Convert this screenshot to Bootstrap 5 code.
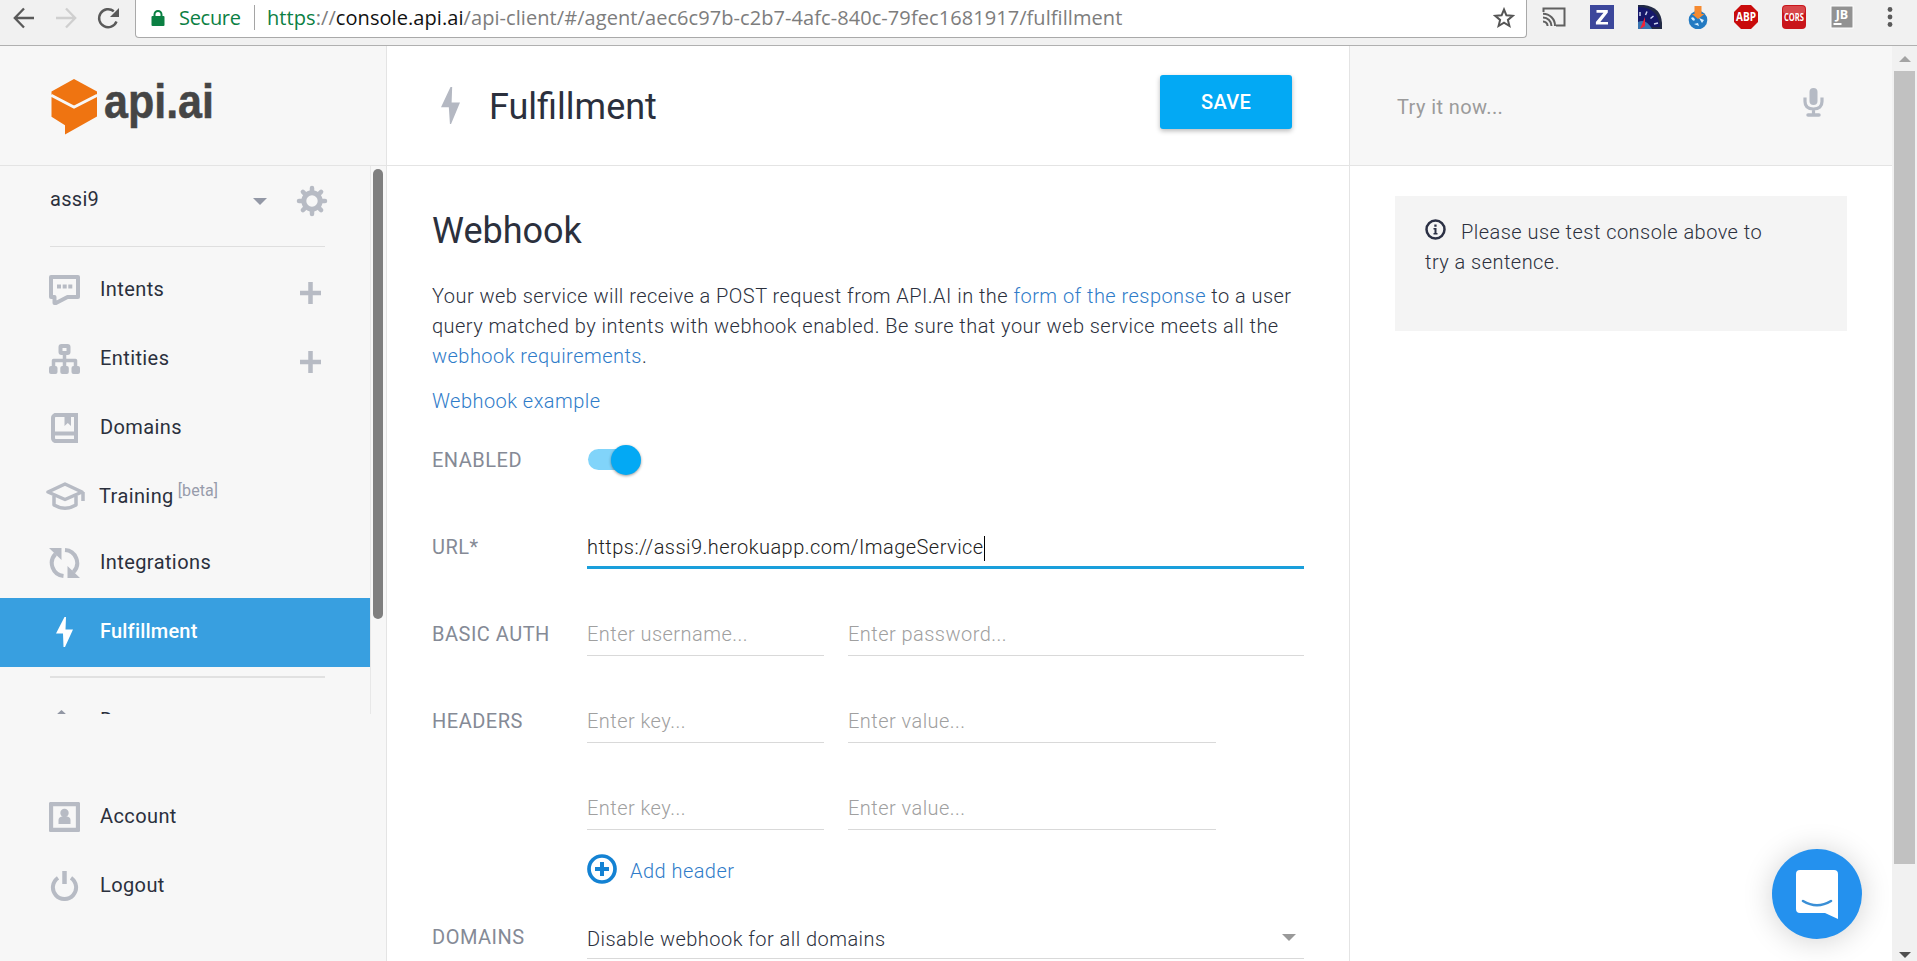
<!DOCTYPE html>
<html lang="en">
<head>
<meta charset="utf-8">
<title>Fulfillment - api.ai</title>
<link rel="stylesheet" href="https://cdn.jsdelivr.net/npm/bootstrap@5.3.0/dist/css/bootstrap.min.css">
<style>
  html, body { height: 961px; overflow: hidden; }
  body { font-family: Roboto, "Liberation Sans", sans-serif; font-size: 20px; line-height: 30px; color: #2b303d; background: #fff; }
  a { color: #2f7cc9; text-decoration: none; }
  svg { display: block; flex: none; }

  .browser-bar { height: 46px; background: #f1f1f1; border-bottom: 1px solid #b0b0b0; padding: 0 21px 0 12px; }
  .omnibox { width: 1392px; height: 38px; margin-left: 13px; border: 1px solid #a9a9a9; border-top: 0; border-radius: 0 0 4px 4px; background: #fff; padding: 0 11px 2px 14px; font-family: "Open Sans", "Noto Sans", sans-serif; font-size: 20px; }
  .secure { color: #0b8043; letter-spacing: -.3px; width: 75px; margin-left: 13px; }
  .bar-sep { width: 1px; height: 25px; background: #a5a5a5; margin-right: 12px; }
  .address { color: #7d7d7d; white-space: nowrap; letter-spacing: .07px; }
  .address b { font-weight: 400; color: #111; }
  .address i { font-style: normal; color: #0b8043; }
  .ext { width: 24px; height: 24px; margin-right: 24px; }

  .app { height: 915px; }
  .side { width: 387px; background: #f7f7f7; border-right: 1px solid #e4e4e4; }
  .top-row { height: 120px; border-bottom: 1px solid #e4e4e4; }
  .side-scroll { height: 548px; overflow: hidden; }
  .side-list { width: 371px; border-right: 1px solid #e8e8e8; }
  .side-thumb { width: 10px; height: 450px; margin: 3px 0 0 2px; border-radius: 5px; background: #7f7f7f; }
  .agent { height: 81px; margin: 0 45px 0 50px; border-bottom: 1px solid #dfdfdf; padding-bottom: 14px; letter-spacing: .3px; }
  .item { height: 69px; padding: 0 48px 2px 49px; letter-spacing: .4px; }
  .item .label-text { margin-left: 20px; padding-bottom: 2px; }
  .item.current { background: #389fe0; color: #fff; font-weight: 500; width: 370px; letter-spacing: .2px; }
  .item sup { font-size: 16px; color: #979cab; top: -.42em; margin-left: 4px; letter-spacing: .1px; }
  .ico { color: #b7bbc4; }
  .rule { height: 2px; margin: 9px 45px 8px 50px; background: #e1e1e1; }

  .main { width: 963px; border-right: 1px solid #e4e4e4; }
  .page-title { font-size: 36px; line-height: 42px; letter-spacing: 0; }
  .btn-save { width: 132px; height: 54px; background: #03a9f4; color: #fff; font-size: 20px; font-weight: 500; border-radius: 3px; box-shadow: 0 2px 5px rgba(0,0,0,.28); border: 0; letter-spacing: .3px; }
  .content { padding: 44px 45px 0 45px; font-weight: 300; letter-spacing: .46px; }
  .field { display: grid; grid-template-columns: 155px 1fr; height: 87px; }
  .field-name { color: #858a96; font-weight: 400; letter-spacing: .5px; }
  .line { height: 37px; border: 0; border-bottom: 1px solid #d9d9d9; border-radius: 0; padding: 0 0 6px; font-size: 20px; font-weight: 300; line-height: 30px; background: transparent; letter-spacing: inherit; }
  .line::placeholder { color: #a0a0a0; opacity: 1; }
  .w-key { width: 237px; }
  .w-val { width: 368px; }
  .w-pass { width: 456px; }
  .line-active { border-bottom: 3px solid #1a9fdb; padding-bottom: 4px; width: 717px; color: #222; }
  .cursor { width: 1px; height: 25px; background: #000; }
  .toggle { position: relative; width: 54px; height: 22px; margin-top: 4px; }
  .toggle-track { width: 48px; height: 21px; border-radius: 11px; background: #81d4fa; margin-left: 1px; }
  .toggle-knob { position: absolute; right: 0; top: -4px; width: 30px; height: 30px; border-radius: 50%; background: #03a9f4; box-shadow: 0 1px 3px rgba(0,0,0,.4); }

  .console { width: 542px; }
  .console .top-row { background: #f7f7f7; padding: 0 68px 0 47px; color: #9b9b9b; font-weight: 400; letter-spacing: .4px; }
  .tip { margin: 30px 45px 0; height: 135px; background: #f4f4f4; padding: 21px 60px 0 30px; font-weight: 300; letter-spacing: .46px; }
  .page-scroll { width: 25px; background: #f1f1f1; }
  .page-thumb { width: 21px; height: 793px; background: #c1c1c1; }
  .chat { position: absolute; left: 1772px; top: 849px; width: 90px; height: 90px; border-radius: 50%; background: #2491ee; box-shadow: 0 2px 30px rgba(0,0,0,.18); }
</style>
</head>
<body class="d-flex flex-column">
<header class="browser-bar d-flex align-items-start">
  <div class="d-flex align-items-center" style="height:35px">
    <svg width="24" height="24" viewBox="0 0 24 24" fill="none" stroke="#5a5a5a" stroke-width="2.3"><path d="M22 12H3M12 2.500 2.800 12l9.200 9.500"/></svg>
    <svg class="ms-3" width="26" height="24" viewBox="0 0 26 24" fill="none" stroke="#cfcfcf" stroke-width="2.300"><path d="M4 12h19M14 2.500 23.200 12 14 21.500"/></svg>
    <svg class="ms-3" width="28" height="24" viewBox="0 0 28 24"><path d="M22.500 15.500A9 9 0 1 1 19.800 5.200" fill="none" stroke="#5a5a5a" stroke-width="2.400"/><path d="M25 2v9h-9z" fill="#5a5a5a"/></svg>
  </div>
  <div class="omnibox d-flex align-items-center">
    <svg width="16" height="18" viewBox="0 0 16 18"><path d="M4.500 8V5.500a3.500 3.500 0 0 1 7 0V8" fill="none" stroke="#0b8043" stroke-width="2"/><rect x="1.500" y="7" width="13" height="10" rx="1" fill="#0b8043"/></svg>
    <span class="secure">Secure</span>
    <span class="bar-sep"></span>
    <span class="address"><i>https</i>://<b>console.api.ai</b>/api-client/#/agent/aec6c97b-c2b7-4afc-840c-79fec1681917/fulfillment</span>
    <svg class="ms-auto" width="22" height="22" viewBox="0 0 22 22" fill="none" stroke="#555" stroke-width="2"><path d="M11 2.500 13.400 8.300 19.700 8.800 14.900 12.900 16.400 19 11 15.700 5.600 19 7.100 12.900 2.300 8.800 8.600 8.300Z"/></svg>
  </div>
  <div class="d-flex align-items-center ms-auto" style="height:34px">
    <svg class="ext" viewBox="0 0 24 24" fill="none" stroke="#606060" stroke-width="2"><path d="M1.500 7V3.500h21v17H14M1 12.500A8.500 8.500 0 0 1 9.500 21M1 8.700A12 12 0 0 1 13 21M1 16.400A4.600 4.600 0 0 1 5.600 21"/></svg>
    <svg class="ext" viewBox="0 0 24 24"><rect width="24" height="24" fill="#3c479b"/><path d="M6.500 5h11.300v2.500L10.300 17h7.700v2.600H5.900V17l7.600-9.300h-7z" fill="#fff"/></svg>
    <svg class="ext" viewBox="0 0 24 24"><path d="M0 0h6q17 2 18 18v6H0z" fill="#222a45"/><path d="M0 2q20 0 22 20H0z" fill="#15176a"/><path d="M0 17q8-4 14 7H0z" fill="#3974b0"/><path d="M2 7v4M9 6.500 7.500 10M15.500 11l-3 2.500M20 18l-4 1" stroke="#ccd4f0" stroke-width="1.500"/><path d="M7 12 2 24l5-3z" fill="#f02338"/></svg>
    <svg class="ext" viewBox="0 0 24 24"><circle cx="12" cy="15" r="9.300" fill="#237ac2"/><path d="M5 13q3-2 4 2-2 2-4-2M13 13l5 2-2 3zM8 19l4-1 1 3z" fill="#d8f0ff"/><path d="M8.500 1h7v8h3L12 14 6 9h2.500z" fill="#f68a30"/></svg>
    <svg class="ext" viewBox="0 0 24 24"><path d="M7 0h10l7 7v10l-7 7H7l-7-7V7z" fill="#c90b0b"/><text x="12" y="16.300" text-anchor="middle" font-family="Open Sans" font-size="11.500" font-weight="700" fill="#fff" textLength="20" lengthAdjust="spacingAndGlyphs">ABP</text></svg>
    <svg class="ext" viewBox="0 0 24 24"><rect width="24" height="24" rx="4" fill="#c9151b"/><rect x="1" y="1" width="22" height="8" rx="3" fill="#d8484b"/><text x="12" y="16" text-anchor="middle" font-family="Open Sans" font-size="10.500" font-weight="700" fill="#fff" textLength="20" lengthAdjust="spacingAndGlyphs">CORS</text></svg>
    <svg class="ext" viewBox="0 0 24 24" overflow="visible"><rect x="1" y="1" width="22" height="22" fill="#929292" stroke="#fff"/><text x="12" y="13.500" text-anchor="middle" font-family="Open Sans" font-size="12.500" font-weight="700" fill="#fff">JB</text><path d="M3.500 19h8" stroke="#fff" stroke-width="2"/></svg>
    <svg width="18" height="24" viewBox="0 0 18 24" fill="#5a5a5a"><circle cx="12" cy="4.500" r="2.400"/><circle cx="12" cy="12" r="2.400"/><circle cx="12" cy="19.500" r="2.400"/></svg>
  </div>
</header>

<div class="app d-flex">
  <aside class="side d-flex flex-column">
    <div class="top-row">
      <svg width="240" height="119" viewBox="0 46 240 119"><path d="M74 79 97 91.500v3.200L74 106.800 51.500 94.700v-3.200z" fill="#ef7411"/><path d="M51.500 97 74 108.700 97 97v19.500L65 134.500v-9.300l-13.500-8.500z" fill="#ef7411"/><path d="M51.500 94.800 74 106.700 97 94.800" fill="none" stroke="#f7f7f7" stroke-width="2"/><text x="104" y="117.700" font-family="Liberation Sans" font-weight="700" font-size="48" fill="#454545" stroke="#454545" stroke-width=".5" textLength="110" lengthAdjust="spacingAndGlyphs">api.ai</text></svg>
    </div>
    <div class="side-scroll d-flex align-items-start">
      <nav class="side-list">
        <div class="agent d-flex align-items-center">
          <span>assi9</span>
          <svg class="ms-auto" width="14" height="7" viewBox="0 0 14 7" style="margin-top:4px"><path d="M0 0h14L7 7z" fill="#9398a6"/></svg>
          <svg class="ico" width="32" height="32" viewBox="0 0 32 32" style="margin:4px -3px 0 29px"><g fill="none" stroke="currentColor"><circle cx="16" cy="16" r="8.200" stroke-width="5"/><path stroke-width="4.500" stroke-linecap="round" d="M16 3v3M16 26v3M3 16h3M26 16h3M6.900 6.900l2 2M23.100 23.100l2 2M6.900 25.100l2-2M23.100 8.900l2-2"/></g></svg>
        </div>
        <div style="height:9px"></div>
        <div class="item d-flex align-items-center">
          <svg class="ico" width="31" height="30" viewBox="0 0 31 30"><path d="M2 2h27v20H18.500L7 28H5.500v-6H2z" fill="none" stroke="currentColor" stroke-width="4" stroke-linejoin="round"/><path d="M8 9.500h4v4H8zM13.700 9.500h4v4h-4zM19.300 9.500h4v4h-4z" fill="currentColor"/></svg>
          <span class="label-text">Intents</span>
          <svg class="ico ms-auto" width="23" height="22" viewBox="0 0 23 22" style="margin-top:6px"><path d="M1 11h21M11.500 0v22" stroke="currentColor" stroke-width="4.500"/></svg>
        </div>
        <div class="item d-flex align-items-center">
          <svg class="ico" width="31" height="30" viewBox="0 0 31 30" fill="none" stroke="currentColor"><rect x="11.500" y="2" width="8" height="7" rx="1" stroke-width="4"/><path d="M15.500 10v14M4.500 24v-7.500h22V24" stroke-width="3.500" stroke-linejoin="round"/><g fill="currentColor" stroke="none"><rect y="22" width="8.500" height="8" rx="2"/><rect x="11.300" y="22" width="8.500" height="8" rx="2"/><rect x="22.500" y="22" width="8.500" height="8" rx="2"/></g></svg>
          <span class="label-text">Entities</span>
          <svg class="ico ms-auto" width="23" height="22" viewBox="0 0 23 22" style="margin-top:6px"><path d="M1 11h21M11.500 0v22" stroke="currentColor" stroke-width="4.500"/></svg>
        </div>
        <div class="item d-flex align-items-center">
          <svg class="ico" width="31" height="30" viewBox="0 0 31 30"><path d="M6 2h21v26H6q-2-1-2-3V5q0-2 2-3zM4 20.500h22" fill="none" stroke="currentColor" stroke-width="4"/><path d="M15.500 3h6.500v10l-3.200-3-3.300 3z" fill="currentColor"/></svg>
          <span class="label-text">Domains</span>
        </div>
        <div class="item d-flex align-items-center" style="height:66px;padding-bottom:0">
          <svg class="ico" width="40" height="30" viewBox="0 0 40 30" style="margin:0 -5px 0 -4px" fill="none" stroke="currentColor" stroke-width="3.500" stroke-linejoin="round"><path d="M3 11 20 3l17 8-17 7.500zM9 15v9q11 6.500 22 0v-9M38 11v9"/></svg>
          <span class="label-text pb-0" style="margin-left:19px">Training<sup>[beta]</sup></span>
        </div>
        <div class="item d-flex align-items-center">
          <svg class="ico" width="31" height="30" viewBox="0 0 31 30"><path d="M14.500 28A13 13 0 0 1 6.500 6M16 2a13 13 0 0 1 8.500 22" fill="none" stroke="currentColor" stroke-width="4"/><path d="M0 0h12.500v12zM18.500 18v12H31z" fill="currentColor"/></svg>
          <span class="label-text">Integrations</span>
        </div>
        <div class="item current d-flex align-items-center">
          <svg width="31" height="30" viewBox="0 0 31 30"><path d="M15.500 0 7 16.500h7L14.500 30h1.500L24 12.500h-7.500L17 0z" fill="#fff"/></svg>
          <span class="label-text">Fulfillment</span>
        </div>
        <div class="rule"></div>
        <div class="item d-flex align-items-center" style="padding-bottom:0">
          <svg class="ico" width="31" height="22" viewBox="0 0 31 22" style="color:#9297a4"><path d="M12.500 0 18 5H7z" fill="currentColor"/></svg>
          <span class="label-text">Docs</span>
        </div>
      </nav>
      <div class="side-thumb"></div>
    </div>
    <div style="margin-top:69px">
      <div class="item d-flex align-items-center">
        <svg class="ico" width="31" height="30" viewBox="0 0 31 30"><rect x="2" y="2" width="27" height="26" fill="none" stroke="currentColor" stroke-width="4.300" stroke-linejoin="round"/><circle cx="15.500" cy="11" r="4.200" fill="currentColor"/><path d="M9.500 22v-4q0-3 3.500-3.500h5q3.500.5 3.500 3.500v4z" fill="currentColor"/></svg>
        <span class="label-text">Account</span>
      </div>
      <div class="item d-flex align-items-center">
        <svg class="ico" width="31" height="30" viewBox="0 0 31 30" fill="none" stroke="currentColor" stroke-width="4"><path d="M9 6.800a11.600 11.600 0 1 0 13 0"/><path d="M15.500 0v13" stroke-width="4.500"/></svg>
        <span class="label-text">Logout</span>
      </div>
    </div>
  </aside>

  <main class="main">
    <div class="top-row d-flex align-items-center">
      <svg width="19" height="37" viewBox="7 0 17 30" preserveAspectRatio="none" style="margin-left:54px" fill="#b4b8c2"><path d="M15.500 0 7 16.500h7L15 30h1L24 12.500h-7.500L17 0z"/></svg>
      <span class="page-title" style="margin-left:29px;padding-top:2px">Fulfillment</span>
      <button class="btn btn-save ms-auto p-0" style="margin:0 57px 7px 0">SAVE</button>
    </div>
    <div class="content">
      <h1 class="page-title fw-normal" style="margin-bottom:29px">Webhook</h1>
      <p style="margin-bottom:15px">Your web service will receive a POST request from API.AI in the <a href="#">form of the response</a> to a user<br>query matched by intents with webhook enabled. Be sure that your web service meets all the<br><a href="#">webhook requirements</a>.</p>
      <p style="margin-bottom:29px"><a href="#">Webhook example</a></p>
      <div class="field">
        <span class="field-name">ENABLED</span>
        <div class="toggle"><div class="toggle-track"></div><div class="toggle-knob"></div></div>
      </div>
      <div class="field">
        <span class="field-name">URL*</span>
        <div class="line line-active d-flex"><span>https://assi9.herokuapp.com/ImageService</span><span class="cursor mt-1"></span></div>
      </div>
      <div class="field">
        <span class="field-name">BASIC AUTH</span>
        <div class="d-flex gap-4"><input class="line w-key" placeholder="Enter username..."><input class="line w-pass" placeholder="Enter password..."></div>
      </div>
      <div class="field">
        <span class="field-name">HEADERS</span>
        <div class="d-flex gap-4"><input class="line w-key" placeholder="Enter key..."><input class="line w-val" placeholder="Enter value..."></div>
      </div>
      <div class="field" style="height:61px">
        <span></span>
        <div class="d-flex gap-4"><input class="line w-key" placeholder="Enter key..."><input class="line w-val" placeholder="Enter value..."></div>
      </div>
      <div class="field" style="height:68px">
        <span></span>
        <a href="#" class="d-flex align-items-start"><svg width="30" height="30" viewBox="0 0 30 30" fill="none" stroke="#1482d3"><circle cx="15" cy="15" r="13" stroke-width="3.700"/><path d="M8 15h14M15 8v14" stroke-width="4"/></svg><span style="margin:2px 0 0 13px">Add header</span></a>
      </div>
      <div class="field" style="height:38px">
        <span class="field-name">DOMAINS</span>
        <div class="line d-flex align-items-center pt-1" style="width:717px"><span>Disable webhook for all domains</span><svg class="ms-auto" width="14" height="7" viewBox="0 0 14 7" style="margin:0 8px 3px 0"><path d="M0 0h14L7 7z" fill="#999"/></svg></div>
      </div>
    </div>
  </main>

  <section class="console">
    <div class="top-row d-flex align-items-center justify-content-between">
      <span style="padding-top:2px">Try it now...</span>
      <svg width="21" height="29" viewBox="0 0 21 29" style="margin-bottom:6px" fill="none" stroke="#b5bac4"><rect x="6.500" width="8" height="17" rx="4" fill="#b5bac4" stroke="none"/><path d="M2 9.500v4q0 7.500 8.500 7.500t8.500-7.500v-4M10.500 21v6" stroke-width="3.200"/><path d="M5 27h11" stroke-width="3.500" stroke-linecap="round"/></svg>
    </div>
    <div class="tip"><svg class="d-inline-block align-baseline" width="21" height="21" viewBox="0 0 21 21" style="margin-right:15px;margin-bottom:-1px"><circle cx="10.500" cy="10.500" r="9" fill="none" stroke="#2b3044" stroke-width="2.500"/><path d="M8.500 9h3v5h1v1.500h-4V14h1v-3.500h-1zM9.300 5.500h2.300v2.200H9.300z" fill="#2b3044"/></svg>Please use test console above to<br>try a sentence.</div>
  </section>

  <div class="page-scroll d-flex flex-column align-items-center">
    <svg width="13" height="25" viewBox="0 0 13 25"><path d="M1 16h12L7 10z" fill="#a3a3a3"/></svg>
    <div class="page-thumb"></div>
    <svg class="mt-auto" width="13" height="9" viewBox="0 0 13 9"><path d="M1 0h12L7 6z" fill="#505050"/></svg>
  </div>
</div>

<div class="chat d-flex align-items-center justify-content-center">
  <svg width="42" height="49" viewBox="0 0 42 49"><path d="M4 0h34q4 0 4 4v45l-13-6H4q-4 0-4-4V4q0-4 4-4z" fill="#fff"/><path d="M7 31q14 8.500 28 0" fill="none" stroke="#3a8fd6" stroke-width="2.600" stroke-linecap="round"/></svg>
</div>
<script src="https://cdn.jsdelivr.net/npm/bootstrap@5.3.0/dist/js/bootstrap.bundle.min.js"></script>
</body>
</html>
